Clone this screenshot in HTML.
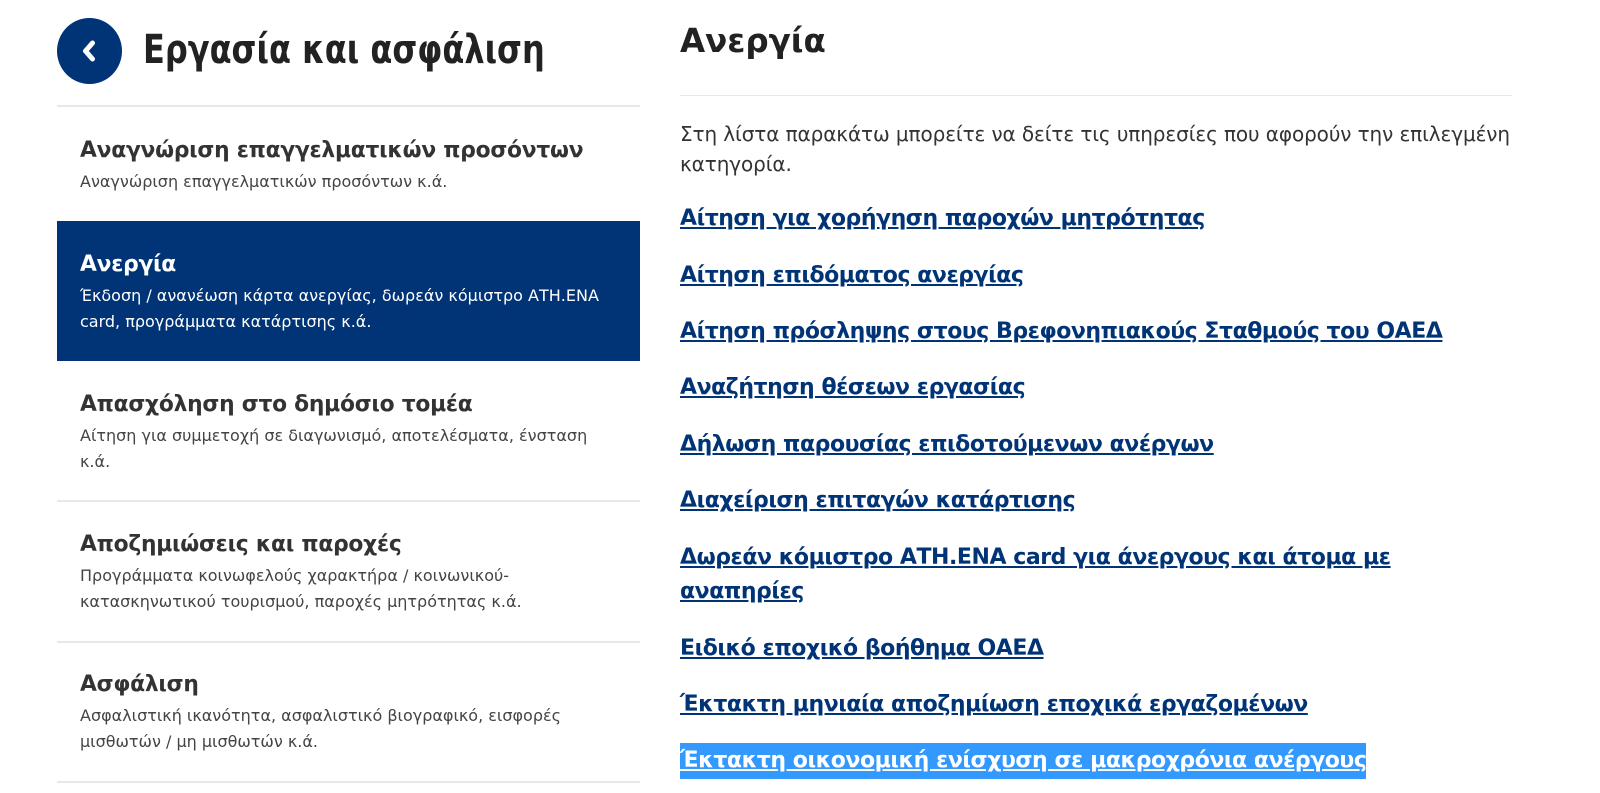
<!DOCTYPE html>
<html><head><meta charset="utf-8"><style>
*{margin:0;padding:0;box-sizing:border-box}
body{width:1600px;height:793px;overflow:hidden;background:#fff;font-family:"DejaVu Sans","Liberation Sans",sans-serif;color:#333;position:relative}
.a{position:absolute;white-space:nowrap}
.circ{position:absolute;left:57px;top:18px;width:65px;height:66px;border-radius:50%;background:#003476}
.title{left:143px;top:25px;font-size:40px;line-height:50px;font-weight:bold;color:#222;transform:scaleX(0.8);transform-origin:0 0}
.hr{position:absolute;height:2px;background:#e8e8e8}
.hd{left:80px;font-size:21.8px;line-height:30px;font-weight:bold;color:#333;letter-spacing:-0.25px}
.sb{left:80px;font-size:16px;line-height:26px;color:#444}
.act{position:absolute;left:57px;top:221px;width:583px;height:140px;background:#003476}
.w{color:#fff}
.h2{left:680px;top:20px;font-size:32.5px;line-height:42px;font-weight:bold;color:#222}
.p{left:680px;font-size:20px;line-height:30px;color:#333;letter-spacing:-0.1px}
.l{position:absolute;left:680px;font-size:22px;line-height:34px;font-weight:bold;color:#003476;text-decoration:underline;white-space:nowrap;letter-spacing:-0.45px}
</style></head><body>
<div class="circ"><svg width="65" height="66" viewBox="0 0 65 66"><path d="M35.5 25 L28.5 33 L35.5 41" stroke="#fff" stroke-width="5" fill="none" stroke-linecap="round" stroke-linejoin="round"/></svg></div>
<div class="a title">Εργασία και ασφάλιση</div>
<div class="hr" style="left:57px;top:105px;width:583px"></div>

<div class="a hd" style="top:136px">Αναγνώριση επαγγελματικών προσόντων</div>
<div class="a sb" style="top:169px">Αναγνώριση επαγγελματικών προσόντων κ.ά.</div>

<div class="act"></div>
<div class="a hd w" style="top:250px">Ανεργία</div>
<div class="a sb w" style="top:283px">Έκδοση / ανανέωση κάρτα ανεργίας, δωρεάν κόμιστρο ΑΤΗ.ΕΝΑ<br>card, προγράμματα κατάρτισης κ.ά.</div>

<div class="a hd" style="top:390px">Απασχόληση στο δημόσιο τομέα</div>
<div class="a sb" style="top:423px">Αίτηση για συμμετοχή σε διαγωνισμό, αποτελέσματα, ένσταση<br>κ.ά.</div>
<div class="hr" style="left:57px;top:500px;width:583px"></div>

<div class="a hd" style="top:530px">Αποζημιώσεις και παροχές</div>
<div class="a sb" style="top:563px">Προγράμματα κοινωφελούς χαρακτήρα / κοινωνικού-<br>κατασκηνωτικού τουρισμού, παροχές μητρότητας κ.ά.</div>
<div class="hr" style="left:57px;top:641px;width:583px"></div>

<div class="a hd" style="top:670px">Ασφάλιση</div>
<div class="a sb" style="top:703px">Ασφαλιστική ικανότητα, ασφαλιστικό βιογραφικό, εισφορές<br>μισθωτών / μη μισθωτών κ.ά.</div>
<div class="hr" style="left:57px;top:781px;width:583px"></div>

<div class="a h2">Ανεργία</div>
<div class="hr" style="left:680px;top:95px;width:832px;height:1px"></div>
<div class="a p" style="top:119px">Στη λίστα παρακάτω μπορείτε να δείτε τις υπηρεσίες που αφορούν την επιλεγμένη<br>κατηγορία.</div>
<a class="l" style="top:202px">Αίτηση για χορήγηση παροχών μητρότητας</a>
<a class="l" style="top:259px">Αίτηση επιδόματος ανεργίας</a>
<a class="l" style="top:315px">Αίτηση πρόσληψης στους Βρεφονηπιακούς Σταθμούς του ΟΑΕΔ</a>
<a class="l" style="top:371px">Αναζήτηση θέσεων εργασίας</a>
<a class="l" style="top:428px">Δήλωση παρουσίας επιδοτούμενων ανέργων</a>
<a class="l" style="top:484px">Διαχείριση επιταγών κατάρτισης</a>
<a class="l" style="top:541px">Δωρεάν κόμιστρο ΑΤΗ.ΕΝΑ card για άνεργους και άτομα με<br>αναπηρίες</a>
<a class="l" style="top:632px">Ειδικό εποχικό βοήθημα ΟΑΕΔ</a>
<a class="l" style="top:688px">Έκτακτη μηνιαία αποζημίωση εποχικά εργαζομένων</a>
<a class="l" style="top:743px;line-height:36px;background:#3399ff;color:#fff">Έκτακτη οικονομική ενίσχυση σε μακροχρόνια ανέργους</a>
</body></html>
